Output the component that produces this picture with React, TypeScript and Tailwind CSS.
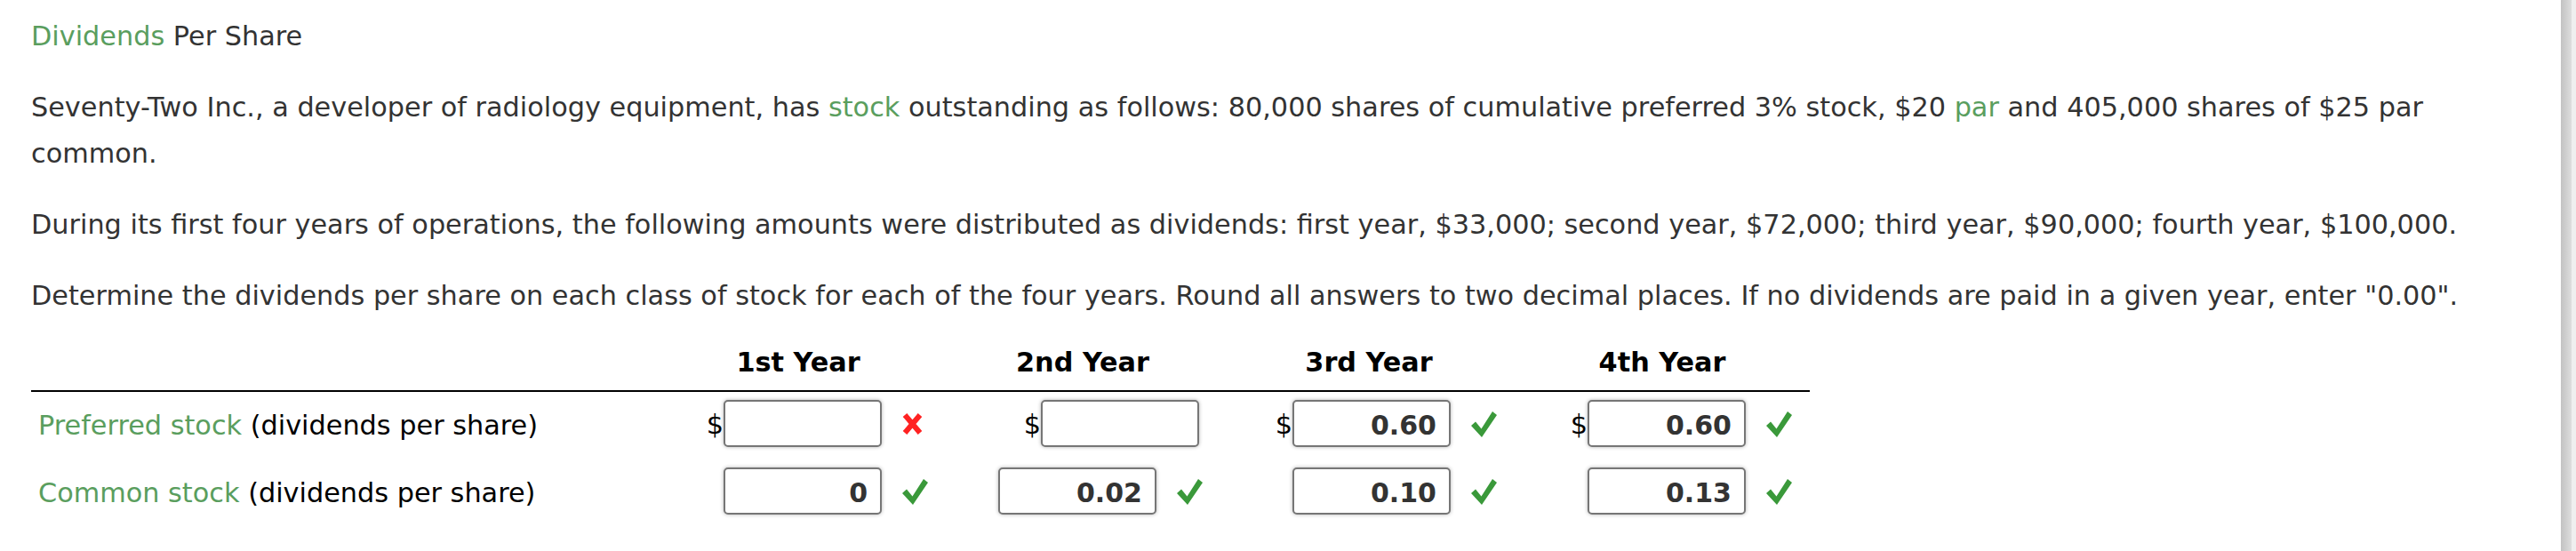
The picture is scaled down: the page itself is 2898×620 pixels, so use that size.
import React from "react";

function Check() {
  return (
    <svg width="29" height="30" viewBox="0 0 29 30" className="block">
      <polygon points="0,17 5,12.5 11.5,20.5 24,1 29,5 12,30" fill="#3a993a" />
    </svg>
  );
}

function Cross() {
  return (
    <svg width="23" height="26" viewBox="0 0 23 26" className="block">
      <path d="M3 3 L20 23 M20 3 L3 23" stroke="#ff2222" strokeWidth="6" fill="none" />
    </svg>
  );
}

type Mark = "check" | "cross" | "none";

function Cell({
  width,
  dollar,
  value,
  mark,
}: {
  width: string;
  dollar: boolean;
  value: string;
  mark: Mark;
}) {
  return (
    <div className={`${width} flex items-center justify-end`}>
      {dollar && <span className="text-black leading-none pt-[3px]">$</span>}
      <input
        readOnly
        value={value}
        className="w-[178px] h-[53px] border-2 border-[#767676] rounded-[5px] bg-white text-right pr-[14px] pt-[4px] font-bold text-[30px] text-[#333] shadow-[0_0_4px_rgba(0,0,0,0.3)] outline-none"
      />
      {mark === "none" ? (
        <span className="w-[4px]" />
      ) : (
        <span className="ml-[23px] w-[29px] flex items-center">
          {mark === "check" ? <Check /> : <Cross />}
        </span>
      )}
    </div>
  );
}

const widths = ["w-[284px]", "w-[309px]", "w-[331px]", "w-[332px]"];

export default function App() {
  const green = "text-[#5a9e5e]";
  return (
    <div className="flex h-[620px] w-full bg-white font-['DejaVu_Sans',sans-serif]">
      <div className="flex-1 pl-[35px] pt-[15px] text-[30.3px] leading-[52px] text-[#333]">
        <div className="w-[2790px]">
          <p>
            <span className={green}>Dividends</span> Per Share
          </p>
          <p className="mt-[28px]">
            Seventy-Two Inc., a developer of radiology equipment, has{" "}
            <span className={green}>stock</span> outstanding as follows: 80,000 shares of
            cumulative preferred 3% stock, $20 <span className={green}>par</span> and 405,000
            shares of $25 par common.
          </p>
          <p className="mt-[28px]">
            During its first four years of operations, the following amounts were distributed as
            dividends: first year, $33,000; second year, $72,000; third year, $90,000; fourth
            year, $100,000.
          </p>
          <p className="mt-[28px]">
            Determine the dividends per share on each class of stock for each of the four years.
            Round all answers to two decimal places. If no dividends are paid in a given year,
            enter "0.00".
          </p>
        </div>

        <div className="mt-[23px] w-[2001px]">
          <div className="flex pb-[5px] border-b-2 border-black font-bold text-black">
            <div className="w-[763px]" />
            <div className="w-[200px] text-center">1st Year</div>
            <div className="ml-[120px] w-[200px] text-center">2nd Year</div>
            <div className="ml-[122px] w-[200px] text-center">3rd Year</div>
            <div className="ml-[130px] w-[200px] text-center">4th Year</div>
          </div>

          <div className="flex items-center pt-[9px] pb-[14px]">
            <div className="w-[725px] pl-[8px] pt-[4px] leading-[46px] text-black">
              <span className={green}>Preferred stock</span> (dividends per share)
            </div>
            <Cell width={widths[0]} dollar value="" mark="cross" />
            <Cell width={widths[1]} dollar value="" mark="none" />
            <Cell width={widths[2]} dollar value="0.60" mark="check" />
            <Cell width={widths[3]} dollar value="0.60" mark="check" />
          </div>

          <div className="flex items-center pt-[9px] pb-[14px]">
            <div className="w-[725px] pl-[8px] pt-[4px] leading-[46px] text-black">
              <span className={green}>Common stock</span> (dividends per share)
            </div>
            <Cell width={widths[0]} dollar={false} value="0" mark="check" />
            <Cell width={widths[1]} dollar={false} value="0.02" mark="check" />
            <Cell width={widths[2]} dollar={false} value="0.10" mark="check" />
            <Cell width={widths[3]} dollar={false} value="0.13" mark="check" />
          </div>
        </div>
      </div>
      <div className="w-[12px] bg-linear-to-r from-[#c2c2c2] to-[#dedede]" />
      <div className="w-[5px] bg-[#efefef]" />
    </div>
  );
}
